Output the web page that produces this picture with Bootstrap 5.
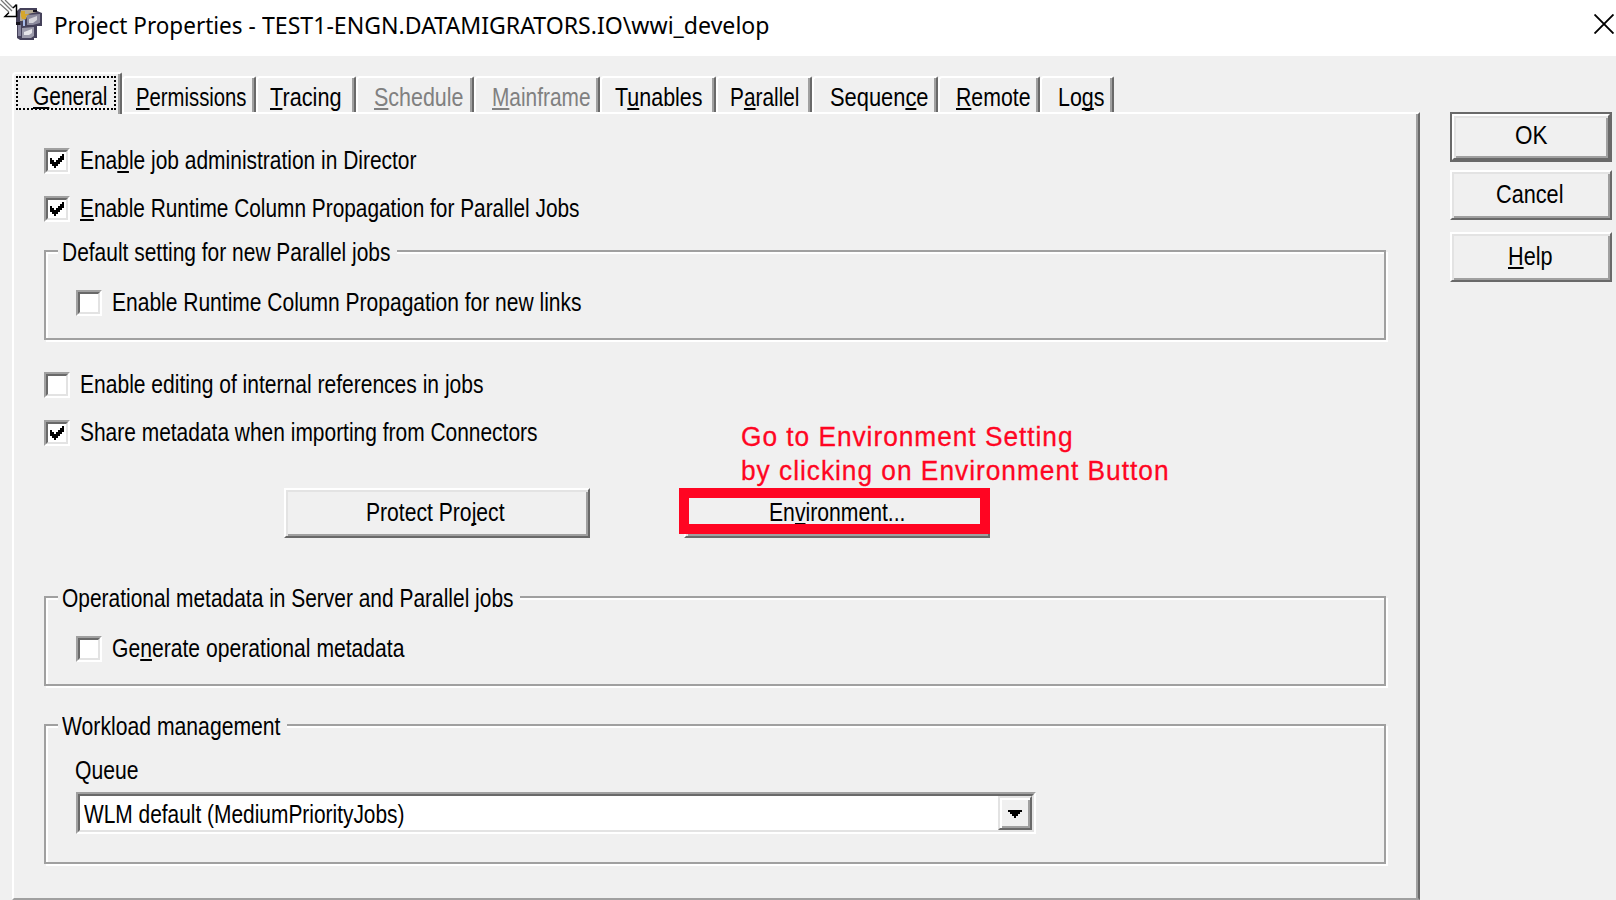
<!DOCTYPE html>
<html lang="en">
<head>
<meta charset="utf-8">
<meta name="viewport" content="width=device-width, initial-scale=1">
<title>Project Properties</title>
<link href="https://cdn.jsdelivr.net/npm/bootstrap@5.3.0/dist/css/bootstrap.min.css" rel="stylesheet">
<style>
:root{--face:#f0f0f0;--shade:#a0a0a0;--dark:#696969;--lite:#e3e3e3;--mark:#ff0522}
body{background:var(--face);color:#000;font:25px/23px "Liberation Sans",Arial,sans-serif;width:1616px;height:900px;overflow:hidden}
u{text-decoration-thickness:2px;text-underline-offset:2px;text-decoration-skip-ink:none}
[data-w]{display:inline-block;white-space:pre;flex:none}
[data-w]>span{display:inline-block;transform-origin:0 0}
.titlebar{height:56px;background:#fff;font:24px/32px "Noto Sans","Open Sans",sans-serif}
.titlebar .caption-text{margin:9px 0 0 10px}
.titlebar .close-x{margin:14px 2px 0 auto}
.tabs{height:40px;margin:16px 0 0 12px;position:relative;z-index:1}
.tab{height:36px;margin-top:4px;padding-top:8px;border-top:2px solid #fff;border-left:2px solid #fff;border-right:2px solid var(--dark);box-shadow:inset -2px 0 var(--shade);border-radius:4px 2px 0 0;background:var(--face);padding-left:16px;flex:none}
.tab.active{height:42px;margin-top:0;padding:2px 0 0 2px}
.tab.active .focus-box{border:2px dotted #000;width:100px;height:34px;padding:7px 0 0 15px}
.tab.off{color:#808080}
.sheet{width:1408px;height:788px;border:2px solid #fff;border-right-color:var(--dark);border-bottom-color:var(--shade);box-shadow:inset -2px 0 var(--shade);margin-left:12px;padding:34px 0 0 30px}
.tick{width:26px;height:26px;flex:none;border:2px solid;border-color:var(--shade) #fff #fff var(--shade)}
.tick i{display:block;width:22px;height:22px;background:#fff;border:2px solid;border-color:var(--dark) var(--lite) var(--lite) var(--dark)}
.tick svg{display:block;margin:2px}
.opt{gap:10px;height:26px}
.opt [data-w]{padding-top:1px}
.frame{width:1342px;border:2px solid var(--shade);box-shadow:2px 2px 0 #fff,inset 2px 2px 0 #fff}
.frame-title{display:block;width:max-content;background:var(--face);margin:-12px 0 0 12px;padding:1px 6px 0 4px;height:24px}
.raised{background:var(--face);height:50px;border:2px solid;border-color:#fff var(--dark) var(--dark) #fff;box-shadow:inset 2px 2px var(--lite),inset -2px -2px var(--shade);padding-top:11px}
.default-ring{border:2px solid var(--dark);height:50px}
.default-ring .raised{height:46px;padding-top:8px}
.side{width:162px;margin-left:30px}
.note{color:var(--mark);font-size:27px;line-height:34px;-webkit-text-stroke:.3px var(--mark)}
.ring{position:absolute;left:-5px;top:0;width:311px;height:46px;border:10px solid var(--mark)}
.combo{width:960px;height:42px;border:2px solid;border-color:var(--shade) #fff #fff var(--shade)}
.combo-in{height:38px;background:#fff;border:2px solid;border-color:var(--dark) var(--lite) var(--lite) var(--dark);padding-left:4px}
.drop{width:34px;height:34px;background:var(--face);border:2px solid;border-color:var(--lite) var(--dark) var(--dark) var(--lite);box-shadow:inset 2px 2px #fff,inset -2px -2px var(--shade)}
.drop svg{display:block;margin:12px 0 0 8px}
</style>
</head>
<body>
<svg width="0" height="0" class="position-absolute"><symbol id="chk" viewBox="0 0 7 7"><path d="M6 0h1v3H6v1H5v1H4v1H3v1H2V6H1V5H0V2h1v1h1v1h1V3h1V2h1V1h1z"/></symbol></svg>

<header class="titlebar d-flex">
  <svg width="44" height="44" viewBox="0 0 44 44">
    <path d="M20 8h17v3l5 2v13h-5v12h-3v2H20l-3-2V24l-1-2V12z" fill="#45415a"/>
    <path d="M18 25h3v11h-3z" fill="#85839c"/>
    <path d="M21 10h13l3 2-9 2-2 5-4 2h-2v-7z" fill="#b5ab97"/>
    <path d="M21 11h4v3h5l-4 2v3h-4l-1-3z" fill="#d6a62c"/>
    <path d="M27 15l13-1v9l-7 2h-6z" fill="#8b899c"/>
    <path d="M29 19l8-3v4l-4 3h-4z" fill="#d4d3da"/>
    <path d="M23 20h2v6h-2z" fill="#a8bbe9"/>
    <path d="M22 28l12-1v9l-3 2h-9z" fill="#9d9bab"/>
    <path d="M24 32l8-3v4l-3 2h-5z" fill="#e6e5e9"/>
    <path d="M33 10h4v2h-4zM16 22h4v3h-4z" fill="#15131d"/>
    <path d="M0 0h5l9 9 1-4h2v12H4l4-4L0 5z" fill="#fff"/>
    <path d="M0 4l9 8M5 0l8 8M1 0l11 11" fill="none" stroke="#777" stroke-width="1.3"/>
    <path d="M16.5 4.500v12H5l4-4M16.500 4.500L13 8" fill="none" stroke="#000" stroke-width="1.500"/>
  </svg>
  <span class="caption-text" data-w="209">Project Properties - </span><span data-w="509" style="margin-top:9px">TEST1-ENGN.DATAMIGRATORS.IO\wwi_develop</span>
  <svg class="close-x" width="20" height="20" viewBox="0 0 20 20"><path d="M.5.5l19 19M19.5.5l-19 19" stroke="#000" stroke-width="1.9"/></svg>
</header>

<div class="d-flex align-items-start">
  <main>
    <nav class="tabs d-flex align-items-start">
      <div class="tab active" style="width:110px"><div class="focus-box"><span data-w="76"><u>G</u>eneral</span></div></div>
      <div class="tab" style="width:134px;padding-left:12px"><span data-w="112"><u>P</u>ermissions</span></div>
      <div class="tab" style="width:100px;padding-left:12px"><span data-w="73"><u>T</u>racing</span></div>
      <div class="tab off" style="width:118px"><span data-w="91"><u>S</u>chedule</span></div>
      <div class="tab off" style="width:126px"><span data-w="100"><u>M</u>ainframe</span></div>
      <div class="tab" style="width:116px;padding-left:13px"><span data-w="89">T<u>u</u>nables</span></div>
      <div class="tab" style="width:96px;padding-left:12px"><span data-w="71">P<u>a</u>rallel</span></div>
      <div class="tab" style="width:126px"><span data-w="100">Sequen<u>c</u>e</span></div>
      <div class="tab" style="width:102px"><span data-w="76"><u>R</u>emote</span></div>
      <div class="tab" style="width:74px"><span data-w="48">Lo<u>g</u>s</span></div>
    </nav>
    <section class="sheet">
      <label class="opt d-flex"><span class="tick"><i><svg width="14" height="14"><use href="#chk"/></svg></i></span><span data-w="338">Ena<u>b</u>le job administration in Director</span></label>
      <label class="opt d-flex" style="margin-top:22px"><span class="tick"><i><svg width="14" height="14"><use href="#chk"/></svg></i></span><span data-w="501"><u>E</u>nable Runtime Column Propagation for Parallel Jobs</span></label>
      <div class="frame" style="height:90px;margin-top:28px">
        <div class="frame-title"><span data-w="330">Default setting for new Parallel jobs</span></div>
        <label class="opt d-flex" style="margin:26px 0 0 30px"><span class="tick"><i></i></span><span data-w="471">Enable Runtime Column Propagation for new links</span></label>
      </div>
      <label class="opt d-flex" style="margin-top:32px"><span class="tick"><i></i></span><span data-w="405">Enable editing of internal references in jobs</span></label>
      <label class="opt d-flex" style="margin-top:22px"><span class="tick"><i><svg width="14" height="14"><use href="#chk"/></svg></i></span><span data-w="459">Share metadata when importing from Connectors</span></label>
      <div class="note" style="margin:-26px 0 0 697px;height:68px"><span data-w="334" style="letter-spacing:1px">Go to Environment Setting</span><br><span data-w="430" style="letter-spacing:1px">by clicking on Environment Button</span></div>
      <div class="d-flex" style="height:50px;margin-left:240px">
        <div class="raised text-center" style="width:306px;padding-right:4px"><span data-w="140">Protect Pro<u>j</u>ect</span></div>
        <div class="position-relative" style="margin-left:94px"><div class="raised text-center" style="width:306px"><span data-w="138">En<u>v</u>ironment...</span></div><div class="ring"></div></div>
      </div>
      <div class="frame" style="height:90px;margin-top:58px">
        <div class="frame-title"><span data-w="453">Operational metadata in Server and Parallel jobs</span></div>
        <label class="opt d-flex" style="margin:26px 0 0 30px"><span class="tick"><i></i></span><span data-w="294">Ge<u>n</u>erate operational metadata</span></label>
      </div>
      <div class="frame" style="height:140px;margin-top:38px">
        <div class="frame-title"><span data-w="220">Workload management</span></div>
        <div style="margin:21px 0 0 29px;height:23px"><span data-w="65">Queue</span></div>
        <div class="combo" style="margin:10px 0 0 30px"><div class="combo-in d-flex justify-content-between"><span style="padding-top:7px"><span data-w="322">WLM default (MediumPriorityJobs)</span></span><span class="drop"><svg width="14" height="8" viewBox="0 0 7 4"><path d="M0 0h7v1H6v1H5v1H4v1H3V3H2V2H1V1H0z"/></svg></span></div></div>
      </div>
    </section>
  </main>
  <aside class="side" style="margin-top:56px">
    <div class="default-ring"><div class="raised text-center"><span data-w="34">OK</span></div></div>
    <div class="raised text-center" style="margin-top:8px;padding-right:2px"><span data-w="69">Cancel</span></div>
    <div class="raised text-center" style="margin-top:12px;padding-right:2px"><span data-w="46"><u>H</u>elp</span></div>
  </aside>
</div>

<script src="https://cdn.jsdelivr.net/npm/bootstrap@5.3.0/dist/js/bootstrap.bundle.min.js"></script>
<script>
document.querySelectorAll('[data-w]').forEach(function (el) {
  var inner = document.createElement('span');
  while (el.firstChild) inner.appendChild(el.firstChild);
  el.appendChild(inner);
  var natural = inner.getBoundingClientRect().width, w = el.dataset.w - 1.5;
  el.style.width = w + 'px';
  el.style.textAlign = 'left';
  el.style.verticalAlign = 'top';
  inner.style.transform = 'scaleX(' + w / natural + ')';
});
</script>
</body>
</html>
